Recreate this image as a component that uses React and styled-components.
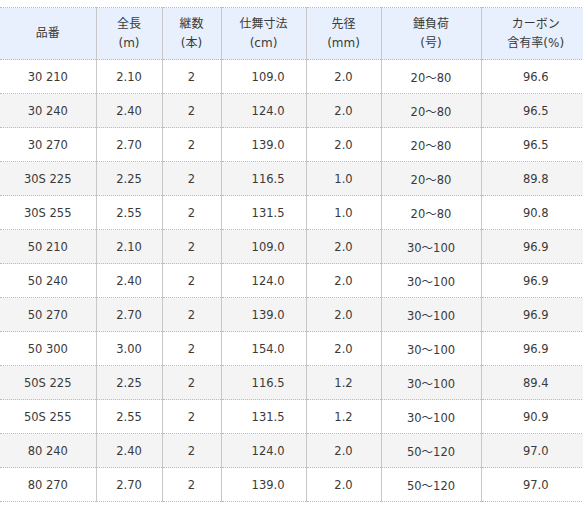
import React from 'react';
import styled, { createGlobalStyle } from 'styled-components';

const GlobalStyle = createGlobalStyle`
  html, body {
    margin: 0;
    padding: 0;
    background: #fff;
    overflow: hidden;
  }
  body {
    font-family: "DejaVu Sans", "Noto Sans CJK JP", sans-serif;
    color: #333;
  }
`;

const Wrapper = styled.div`
  padding-top: 7px;
  width: 590px;
`;

const Table = styled.table`
  width: 590px;
  border-collapse: collapse;
  table-layout: fixed;
  font-size: 11.5px;
  color: #3a3a3a;
`;

const HeadCell = styled.th`
  background: #e7f0fc;
  font-weight: normal;
  font-size: 12px;
  height: 51px;
  line-height: 19px;
  padding: 0;
  text-align: center;
  border-top: 1px dotted #bbb;
  border-bottom: 1px dotted #bbb;
  border-left: 1px solid #c8c8c8;
  &:first-child { border-left: none; }
`;

const Row = styled.tr`
  background: ${p => (p.$alt ? '#f4f4f4' : '#fff')};
`;

const Cell = styled.td`
  height: 33px;
  padding: 0 ${p => (p.$right ? '21px' : '0')} 0 0;
  text-align: ${p => (p.$right ? 'right' : 'center')};
  border-bottom: 1px dotted #bbb;
  border-left: 1px solid #c8c8c8;
  &:first-child { border-left: none; }
`;

const columns = [
  { w: 96, label: ['品番'] },
  { w: 66, label: ['全長', '(m)'] },
  { w: 59, label: ['継数', '(本)'] },
  { w: 85, label: ['仕舞寸法', '(cm)'] },
  { w: 75, label: ['先径', '(mm)'] },
  { w: 100, label: ['錘負荷', '(号)'] },
  { w: 109, label: ['カーボン', '含有率(%)'] },
];

const rows = [
  ['30 210', '2.10', '2', '109.0', '2.0', '20～80', '96.6'],
  ['30 240', '2.40', '2', '124.0', '2.0', '20～80', '96.5'],
  ['30 270', '2.70', '2', '139.0', '2.0', '20～80', '96.5'],
  ['30S 225', '2.25', '2', '116.5', '1.0', '20～80', '89.8'],
  ['30S 255', '2.55', '2', '131.5', '1.0', '20～80', '90.8'],
  ['50 210', '2.10', '2', '109.0', '2.0', '30～100', '96.9'],
  ['50 240', '2.40', '2', '124.0', '2.0', '30～100', '96.9'],
  ['50 270', '2.70', '2', '139.0', '2.0', '30～100', '96.9'],
  ['50 300', '3.00', '2', '154.0', '2.0', '30～100', '96.9'],
  ['50S 225', '2.25', '2', '116.5', '1.2', '30～100', '89.4'],
  ['50S 255', '2.55', '2', '131.5', '1.2', '30～100', '90.9'],
  ['80 240', '2.40', '2', '124.0', '2.0', '50～120', '97.0'],
  ['80 270', '2.70', '2', '139.0', '2.0', '50～120', '97.0'],
];

export default function App() {
  return (
    <Wrapper>
      <GlobalStyle />
      <Table>
        <colgroup>
          {columns.map((c, i) => <col key={i} style={{ width: c.w }} />)}
        </colgroup>
        <thead>
          <tr>
            {columns.map((c, i) => (
              <HeadCell key={i}>
                {c.label.map((l, j) => <div key={j}>{l}</div>)}
              </HeadCell>
            ))}
          </tr>
        </thead>
        <tbody>
          {rows.map((r, i) => (
            <Row key={i} $alt={i % 2 === 1}>
              {r.map((v, j) => (
                <Cell key={j} $right={j === 3}>{v}</Cell>
              ))}
            </Row>
          ))}
        </tbody>
      </Table>
    </Wrapper>
  );
}
